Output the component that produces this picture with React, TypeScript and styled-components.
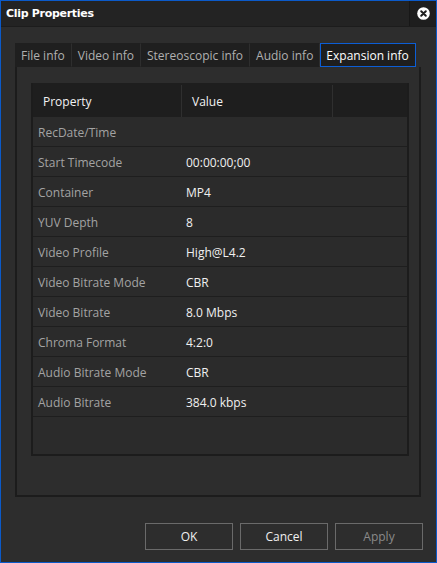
import React from "react";
import styled, { createGlobalStyle } from "styled-components";

const GlobalStyle = createGlobalStyle`
  html, body {
    margin: 0;
    padding: 0;
    background: #2d2d2d;
  }
  * {
    box-sizing: border-box;
  }
`;

const Window = styled.div`
  width: 437px;
  height: 563px;
  border: 1px solid #0b5ac9;
  background: #2d2d2d;
  display: flex;
  flex-direction: column;
  font-family: "Open Sans", "Noto Sans", sans-serif;
  font-size: 12px;
  color: #e6e6e6;
`;

const TitleBar = styled.div`
  height: 26px;
  display: flex;
  align-items: stretch;
  background: #232323;
  border-bottom: 1px solid #1c1c1c;
`;

const Title = styled.div`
  flex: 1;
  display: flex;
  align-items: center;
  padding-left: 5px;
  font-family: "DejaVu Sans", "Liberation Sans", sans-serif;
  font-weight: bold;
  font-size: 11px;
  letter-spacing: -0.3px;
  color: #ffffff;
`;

const CloseBox = styled.div`
  width: 27px;
  display: flex;
  align-items: center;
  justify-content: center;
  background: #1e1e1e;
  border-left: 1px solid #171717;
`;

const Body = styled.div`
  flex: 1;
  display: flex;
  flex-direction: column;
  padding: 16px 15px 0 14px;
`;

const TabRow = styled.div`
  display: flex;
  height: 24px;
`;

const Tab = styled.div<{ $active?: boolean }>`
  display: flex;
  align-items: center;
  padding: 0 6px 0 5px;
  background: ${p => (p.$active ? "#1e1e1e" : "#1f1f1f")};
  color: ${p => (p.$active ? "#ffffff" : "#b0b0b0")};
  border: 1px solid ${p => (p.$active ? "#0c5ed6" : "transparent")};
  border-right: 1px solid ${p => (p.$active ? "#0c5ed6" : "#2e2e2e")};
  white-space: nowrap;
`;

const Panel = styled.div`
  height: 430px;
  border: 2px solid #1c1c1c;
  border-top: 0;
  padding: 16px 10px 0 14px;
`;

const Table = styled.div`
  height: 373px;
  border: 2px solid #1c1c1c;
  border-top: 0;
  background: #2b2b2b;
  display: flex;
  flex-direction: column;
`;

const HeaderRow = styled.div`
  display: grid;
  grid-template-columns: 149px 151px 1fr;
  height: 34px;
  background: #1e1e1e;
`;

const HeaderCell = styled.div<{ $divider?: boolean }>`
  display: flex;
  align-items: center;
  padding-left: 10px;
  margin-top: 2px;
  color: #f2f2f2;
  border-right: ${p => (p.$divider ? "1px solid #2f2f2f" : "0")};
`;

const Row = styled.div`
  display: grid;
  grid-template-columns: 152px 1fr;
  height: 30px;
  padding-top: 2px;
  border-bottom: 1px solid #1e1e1e;
`;

const LabelCell = styled.div`
  display: flex;
  align-items: center;
  padding-left: 5px;
  color: #a3a3a3;
`;

const ValueCell = styled.div`
  display: flex;
  align-items: center;
  padding-left: 1px;
  color: #f0f0f0;
`;

const Footer = styled.div`
  display: flex;
  justify-content: flex-end;
  gap: 7px;
  padding-top: 26px;
  margin-right: -2px;
`;

const Button = styled.div<{ $disabled?: boolean }>`
  width: 88px;
  height: 27px;
  display: flex;
  align-items: center;
  justify-content: center;
  border: 1px solid #6a6a6a;
  background: #2d2d2d;
  color: ${p => (p.$disabled ? "#8a8a8a" : "#f0f0f0")};
`;

const CloseIcon = () => (
  <svg width="13" height="13" viewBox="0 0 13 13">
    <circle cx="6.5" cy="6.5" r="6.3" fill="#ffffff" />
    <path d="M4.2 4.2 L8.8 8.8 M8.8 4.2 L4.2 8.8" stroke="#1e1e1e" strokeWidth="2" strokeLinecap="round" />
  </svg>
);

const tabs = ["File info", "Video info", "Stereoscopic info", "Audio info", "Expansion info"];

const rows: [string, string][] = [
  ["RecDate/Time", ""],
  ["Start Timecode", "00:00:00;00"],
  ["Container", "MP4"],
  ["YUV Depth", "8"],
  ["Video Profile", "High@L4.2"],
  ["Video Bitrate Mode", "CBR"],
  ["Video Bitrate", "8.0 Mbps"],
  ["Chroma Format", "4:2:0"],
  ["Audio Bitrate Mode", "CBR"],
  ["Audio Bitrate", "384.0 kbps"],
];

const App: React.FunctionComponent = () => {
  return (
    <>
      <GlobalStyle />
      <Window>
        <TitleBar>
          <Title>Clip Properties</Title>
          <CloseBox>
            <CloseIcon />
          </CloseBox>
        </TitleBar>
        <Body>
          <TabRow>
            {tabs.map(t => (
              <Tab key={t} $active={t === "Expansion info"}>
                {t}
              </Tab>
            ))}
          </TabRow>
          <Panel>
            <Table>
              <HeaderRow>
                <HeaderCell $divider>Property</HeaderCell>
                <HeaderCell $divider>Value</HeaderCell>
                <HeaderCell />
              </HeaderRow>
              {rows.map(([k, v]) => (
                <Row key={k}>
                  <LabelCell>{k}</LabelCell>
                  <ValueCell>{v}</ValueCell>
                </Row>
              ))}
            </Table>
          </Panel>
          <Footer>
            <Button>OK</Button>
            <Button>Cancel</Button>
            <Button $disabled>Apply</Button>
          </Footer>
        </Body>
      </Window>
    </>
  );
};

export default App;
